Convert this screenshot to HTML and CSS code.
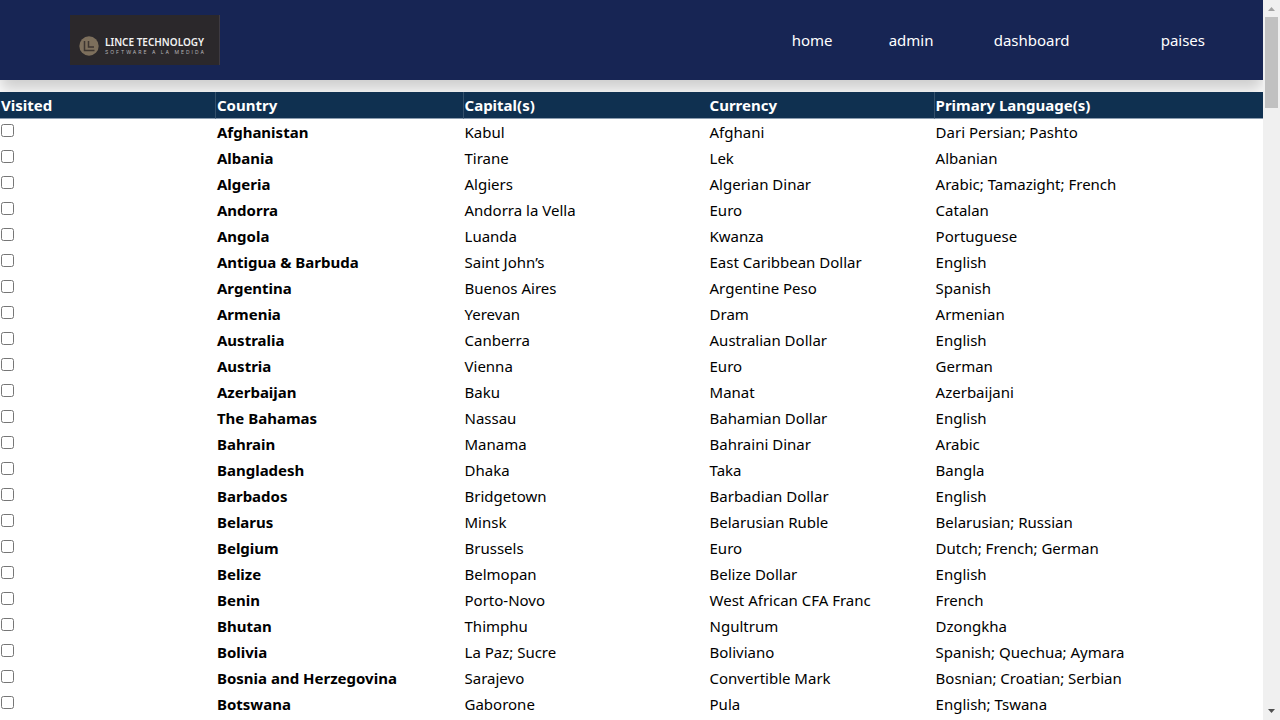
FILE: index.html
```html
<!DOCTYPE html>
<html lang="en">
<head>
<meta charset="utf-8">
<title>Paises</title>
<link rel="stylesheet" href="styles.css">
</head>
<body>
<div class="content">
<header class="header">
<a class="logo" href="#" aria-label="Lince Technology">
<svg class="logo-mark" viewBox="0 0 20 20" aria-hidden="true"><circle cx="10" cy="10" r="9.7" fill="#7d6f5c"/><path d="M5.500 5v9.500h10M9.500 5v6h5.500" fill="none" stroke="#3d3530" stroke-width="1.500"/></svg>
<span class="logo-text"><span class="logo-name">LINCE TECHNOLOGY</span><span class="logo-tag">SOFTWARE A LA MEDIDA</span></span>
</a>
<nav class="nav"><a href="#">home</a><a href="#">admin</a><a href="#">dashboard</a><a href="#">paises</a></nav>
</header>
<table class="countries">
<colgroup><col class="col-visited"><col class="col-country"><col class="col-capital"><col class="col-currency"><col></colgroup>
<thead><tr><th class="divided">Visited</th><th class="divided">Country</th><th>Capital(s)</th><th class="divided">Currency</th><th>Primary Language(s)</th></tr></thead>
<tbody id="rows"></tbody>
</table>
</div>
<div class="scrollbar" aria-hidden="true">
<svg class="arrow" viewBox="0 0 17 17"><path d="M5 11h7l-3.5-4z" fill="#a3a3a3"/></svg>
<div class="thumb"></div>
<svg class="arrow arrow-down" viewBox="0 0 17 17"><path d="M5 6h7l-3.5 4z" fill="#505050"/></svg>
</div>
<script src="script.js"></script>
</body>
</html>
```
FILE: styles.css
```css
* { box-sizing: border-box; }
body {
  margin: 0;
  height: 100vh;
  overflow: hidden;
  display: flex;
  background: #fff;
  color: #000;
  font: 15px/24px "Noto Sans", "Open Sans", sans-serif;
}
.content { flex: 1; min-width: 0; overflow: hidden; }
.header {
  height: 80px;
  margin-bottom: 12px;
  padding: 0 58px 0 70px;
  display: flex;
  align-items: center;
  justify-content: space-between;
  background: #172554;
  box-shadow: 0 10px 15px 0 rgba(0, 0, 0, 0.2);
}
.logo {
  width: 150px;
  height: 50px;
  padding: 12px 0 0 9px;
  display: flex;
  align-items: center;
  gap: 6px;
  background: #2b282b;
  border-right: 1px solid #3d3a42;
  color: #f2f2f2;
  text-decoration: none;
}
.logo-mark { width: 20px; height: 20px; }
.logo-text { display: flex; flex-direction: column; white-space: nowrap; }
.logo-name { font: 600 10px/12px "Noto Sans", sans-serif; }
.logo-tag { font: 5px/8px Inter, sans-serif; letter-spacing: 2px; color: #b5b2b5; }
.nav { display: grid; grid-template-columns: 97px 105px 167px auto; }
.nav a { color: #fff; text-decoration: none; }
.countries { width: 100%; table-layout: fixed; border-collapse: separate; border-spacing: 0; }
.col-visited { width: 17.1%; }
.col-country { width: 19.6%; }
.col-capital { width: 19.4%; }
.col-currency { width: 17.9%; }
.countries th, .countries td { height: 26px; padding: 0 1px; text-align: left; white-space: nowrap; }
.countries thead th {
  height: 27px;
  background: #0f3050;
  color: #fff;
  border-bottom: 1px solid #8c9db0;
}
.countries .divided { border-right: 1px solid #34506b; }
.countries tbody th { font-weight: 700; }
.visit { display: block; width: 13px; height: 13px; margin: 0 0 3px; }
.scrollbar {
  width: 17px;
  display: flex;
  flex-direction: column;
  background: #f0f0f0;
}
.arrow { width: 17px; height: 17px; }
.thumb { height: 91px; margin: 0 2px; background: #c1c1c1; }
.arrow-down { margin-top: auto; }
```
FILE: script.js
```js
const countries = [
  ["Afghanistan", "Kabul", "Afghani", "Dari Persian; Pashto"],
  ["Albania", "Tirane", "Lek", "Albanian"],
  ["Algeria", "Algiers", "Algerian Dinar", "Arabic; Tamazight; French"],
  ["Andorra", "Andorra la Vella", "Euro", "Catalan"],
  ["Angola", "Luanda", "Kwanza", "Portuguese"],
  ["Antigua & Barbuda", "Saint John’s", "East Caribbean Dollar", "English"],
  ["Argentina", "Buenos Aires", "Argentine Peso", "Spanish"],
  ["Armenia", "Yerevan", "Dram", "Armenian"],
  ["Australia", "Canberra", "Australian Dollar", "English"],
  ["Austria", "Vienna", "Euro", "German"],
  ["Azerbaijan", "Baku", "Manat", "Azerbaijani"],
  ["The Bahamas", "Nassau", "Bahamian Dollar", "English"],
  ["Bahrain", "Manama", "Bahraini Dinar", "Arabic"],
  ["Bangladesh", "Dhaka", "Taka", "Bangla"],
  ["Barbados", "Bridgetown", "Barbadian Dollar", "English"],
  ["Belarus", "Minsk", "Belarusian Ruble", "Belarusian; Russian"],
  ["Belgium", "Brussels", "Euro", "Dutch; French; German"],
  ["Belize", "Belmopan", "Belize Dollar", "English"],
  ["Benin", "Porto-Novo", "West African CFA Franc", "French"],
  ["Bhutan", "Thimphu", "Ngultrum", "Dzongkha"],
  ["Bolivia", "La Paz; Sucre", "Boliviano", "Spanish; Quechua; Aymara"],
  ["Bosnia and Herzegovina", "Sarajevo", "Convertible Mark", "Bosnian; Croatian; Serbian"],
  ["Botswana", "Gaborone", "Pula", "English; Tswana"]
];
const body = document.getElementById("rows");
for (const [name, ...details] of countries) {
  const row = body.insertRow();
  const box = document.createElement("input");
  box.type = "checkbox";
  box.className = "visit";
  box.setAttribute("aria-label", "Visited " + name);
  row.insertCell().append(box);
  const heading = document.createElement("th");
  heading.scope = "row";
  heading.textContent = name;
  row.append(heading);
  for (const text of details) row.insertCell().textContent = text;
}
```
